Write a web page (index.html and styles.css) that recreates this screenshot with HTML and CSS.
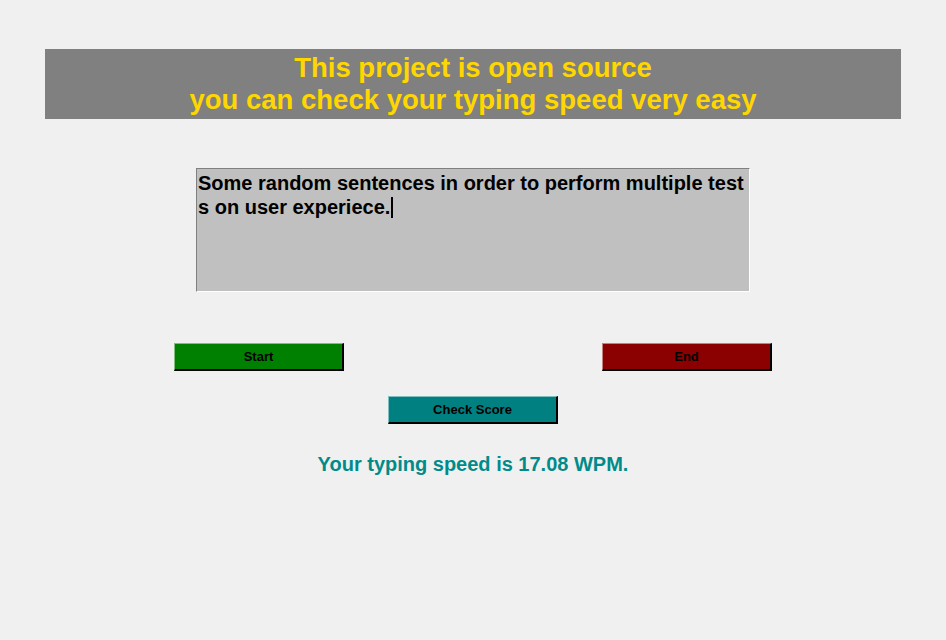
FILE: index.html
```html
<!DOCTYPE html>
<html>
<head>
<meta charset="utf-8">
<link rel="stylesheet" href="styles.css">
</head>
<body>
<div class="app">
  <header class="banner">
    <div>This project is open source</div>
    <div>you can check your typing speed very easy</div>
  </header>
  <div class="editor">Some random sentences in order to perform multiple test<br>s on user experiece.<span class="caret"></span></div>
  <div class="controls">
    <button class="btn btn-start">Start</button>
    <button class="btn btn-end">End</button>
  </div>
  <button class="btn btn-score">Check Score</button>
  <p class="result">Your typing speed is 17.08 WPM.</p>
</div>
</body>
</html>
```
FILE: styles.css
```css
html, body {
  margin: 0;
  padding: 0;
  background: #f0f0f0;
  width: 946px;
  height: 640px;
  overflow: hidden;
}
.app {
  display: flex;
  flex-direction: column;
  align-items: center;
  padding-top: 49px;
  font-family: "Liberation Sans", Arial, sans-serif;
}
.banner {
  width: 856px;
  height: 70px;
  box-sizing: border-box;
  background: #808080;
  color: #ffd700;
  font-weight: bold;
  font-size: 27.5px;
  line-height: 32px;
  text-align: center;
  padding-top: 3px;
}
.editor {
  margin-top: 49px;
  width: 554px;
  height: 124px;
  box-sizing: border-box;
  background: #c0c0c0;
  border-top: 1px solid #808080;
  border-left: 1px solid #808080;
  border-right: 1px solid #ffffff;
  border-bottom: 1px solid #ffffff;
  padding: 2px 1px;
  font-size: 20px;
  font-weight: bold;
  line-height: 24px;
  color: #000;
}
.caret {
  display: inline-block;
  width: 2px;
  height: 21px;
  background: #000;
  vertical-align: -4px;
  margin-left: 1px;
}
.controls {
  margin-top: 51px;
  width: 598px;
  display: flex;
  justify-content: space-between;
}
.btn {
  width: 170px;
  height: 28px;
  box-sizing: border-box;
  font-family: "Liberation Sans", Arial, sans-serif;
  font-weight: bold;
  font-size: 13px;
  color: #000;
  border-top: 1px solid rgba(255,255,255,0.5);
  border-left: 1px solid rgba(255,255,255,0.5);
  border-right: 2px solid #000;
  border-bottom: 2px solid #000;
  padding: 0;
  margin: 0;
}
.btn-start { background: #008000; }
.btn-end { background: #8b0000; }
.btn-score { background: #008080; margin-top: 25px; }
.result {
  margin: 28px 0 0;
  color: #008b8b;
  font-weight: bold;
  font-size: 20px;
  line-height: 24px;
}
```
